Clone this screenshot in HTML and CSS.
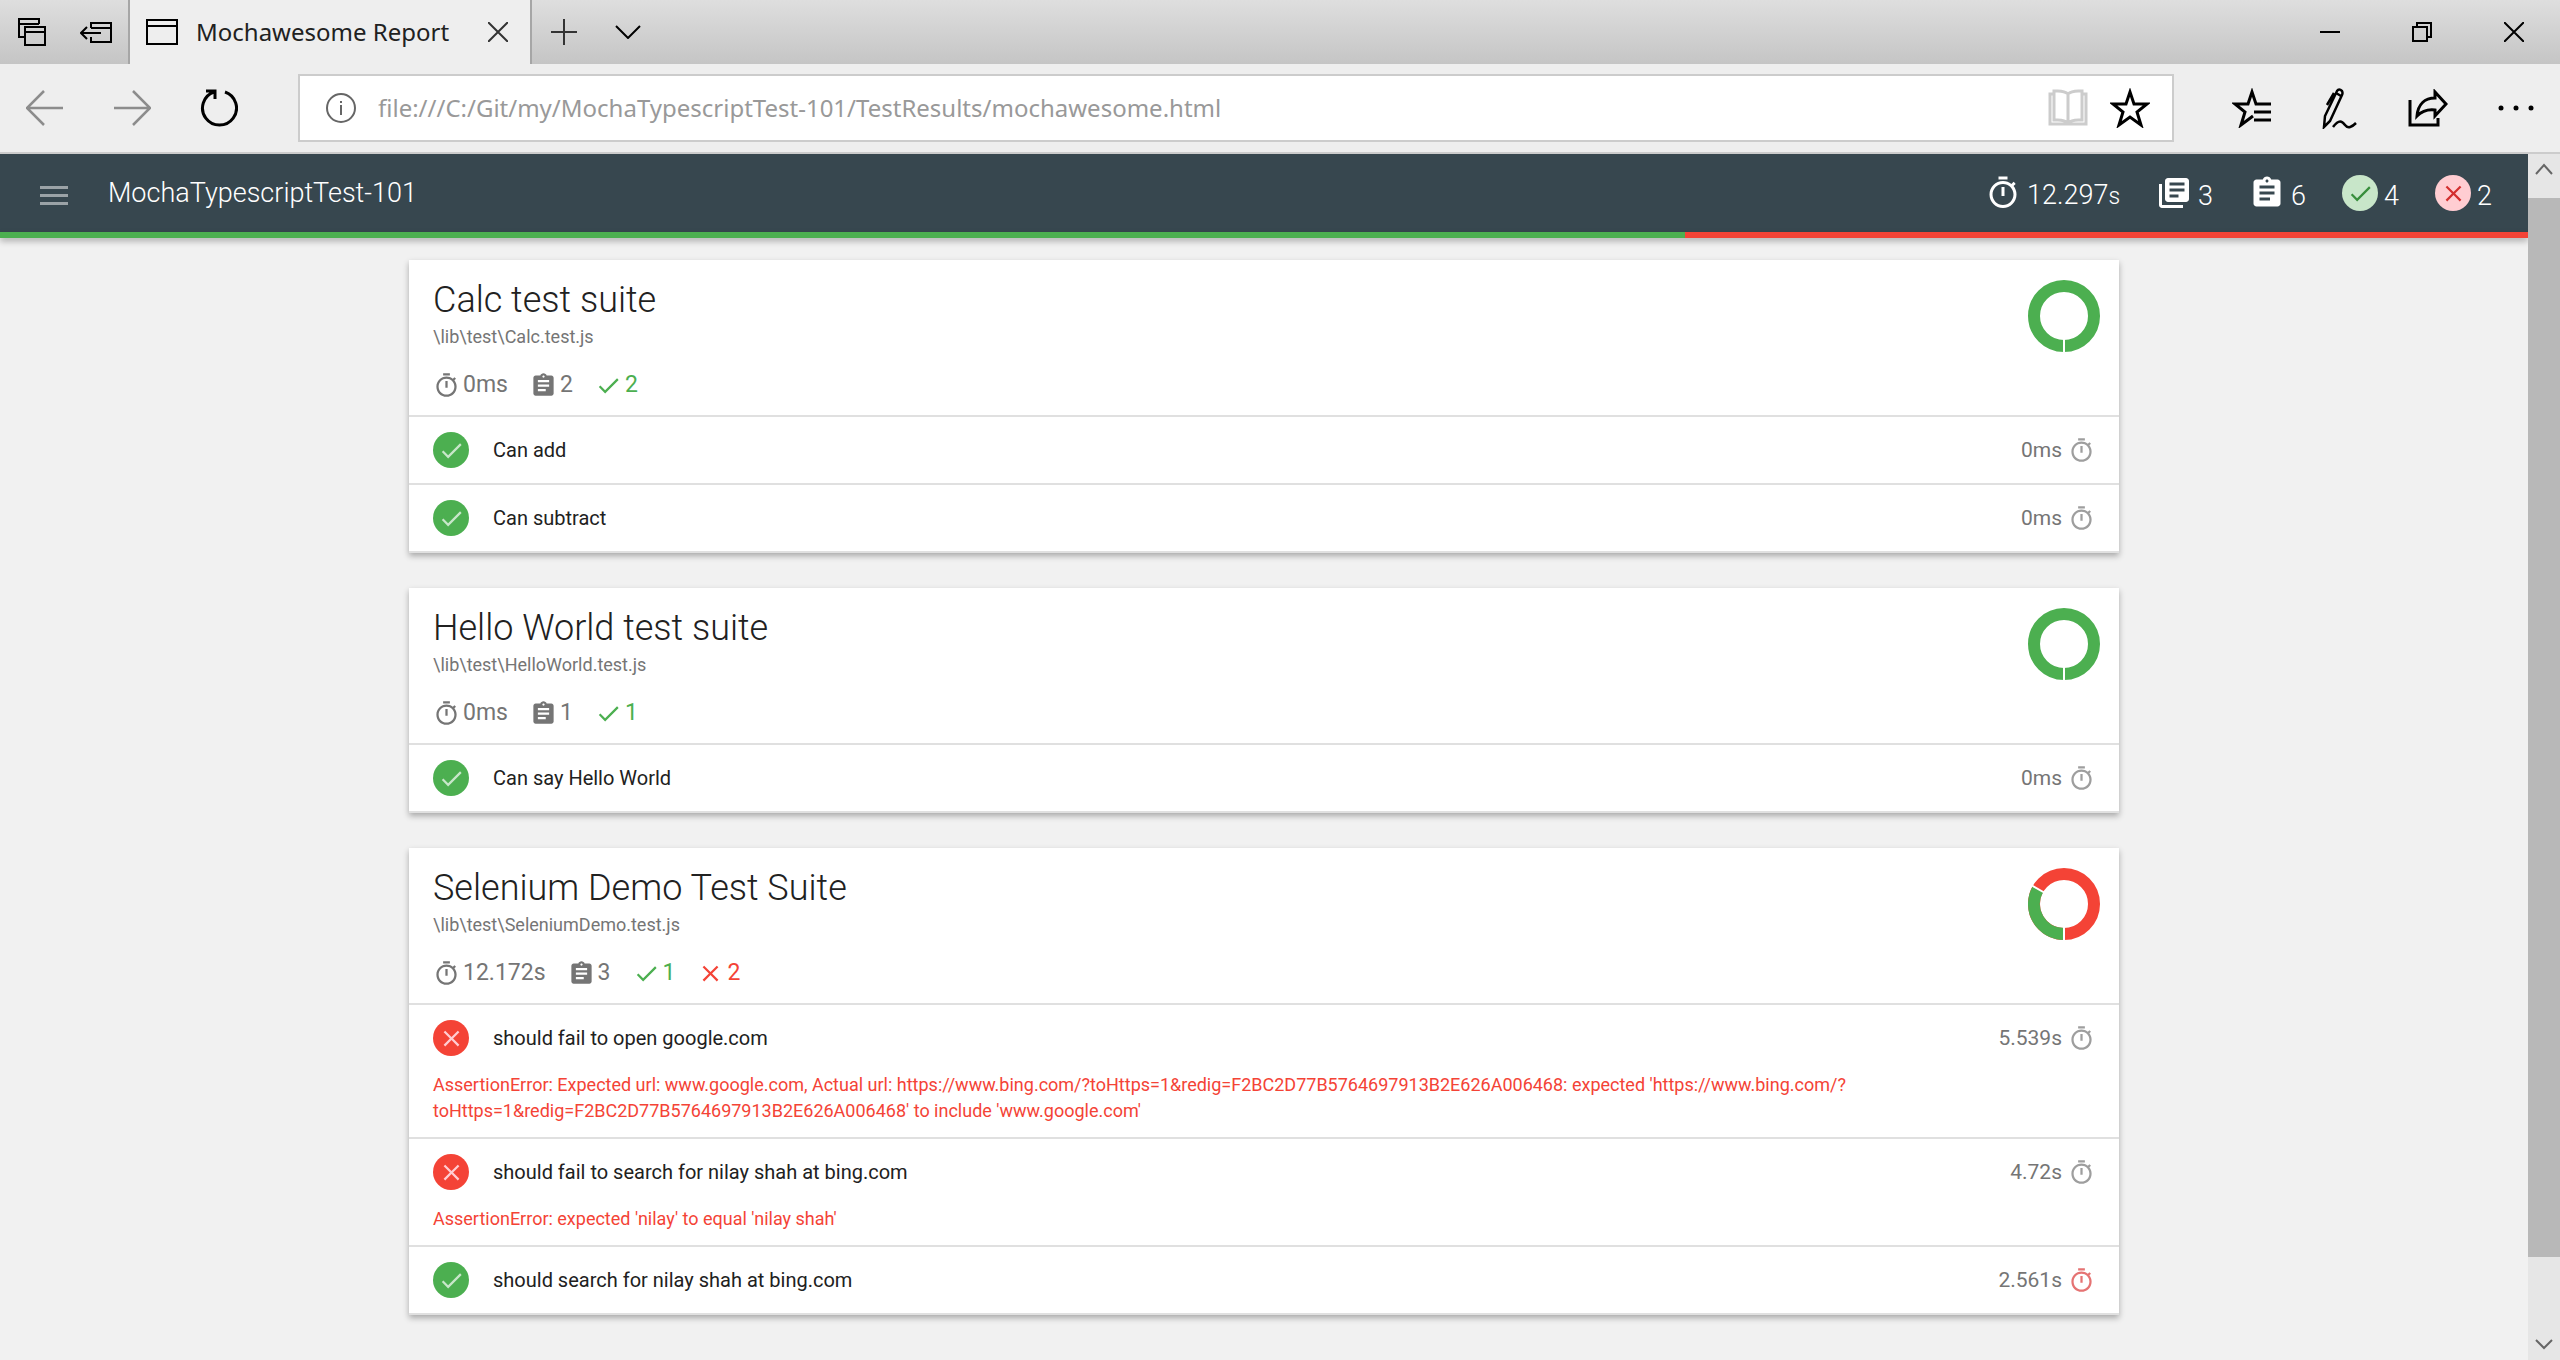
FILE: index.html
```html
<!DOCTYPE html>
<html lang="en">
<head>
<meta charset="utf-8">
<title>Mochawesome Report</title>
<link rel="stylesheet" href="styles.css">
</head>
<body>
<svg class="sprite" aria-hidden="true">
  <symbol id="timer" viewBox="0 0 24 24"><path d="M15 1H9v2h6V1zm-4 13h2V8h-2v6zm8.03-6.61l1.42-1.42c-.43-.51-.9-.99-1.41-1.41l-1.42 1.42C16.07 4.74 14.12 4 12 4c-4.97 0-9 4.03-9 9s4.02 9 9 9 9-4.03 9-9c0-2.12-.74-4.07-1.97-5.61zM12 20c-3.87 0-7-3.13-7-7s3.13-7 7-7 7 3.13 7 7-3.13 7-7 7z"/></symbol>
  <symbol id="library" viewBox="0 0 24 24"><path d="M4 6H2v14c0 1.100.9 2 2 2h14v-2H4V6zm16-4H8c-1.100 0-2 .9-2 2v12c0 1.100.9 2 2 2h12c1.100 0 2-.9 2-2V4c0-1.100-.9-2-2-2zm-1 9H9V9h10v2zm-4 4H9v-2h6v2zm4-8H9V5h10v2z"/></symbol>
  <symbol id="assignment" viewBox="0 0 24 24"><path d="M19 3h-4.180C14.400 1.840 13.300 1 12 1c-1.300 0-2.400.84-2.820 2H5c-1.100 0-2 .9-2 2v14c0 1.100.9 2 2 2h14c1.100 0 2-.9 2-2V5c0-1.100-.9-2-2-2zm-7 0c.55 0 1 .45 1 1s-.45 1-1 1-1-.45-1-1 .45-1 1-1zm2 14H7v-2h7v2zm3-4H7v-2h10v2zm0-4H7V7h10v2z"/></symbol>
  <symbol id="check" viewBox="0 0 24 24"><path d="M9 16.200L4.800 12l-1.400 1.400L9 19 21 7l-1.400-1.400L9 16.200z"/></symbol>
  <symbol id="close" viewBox="0 0 24 24"><path d="M19 6.410L17.590 5 12 10.590 6.410 5 5 6.410 10.590 12 5 17.590 6.410 19 12 13.410 17.590 19 19 17.590 13.410 12z"/></symbol>
</svg>

<header class="titlebar">
  <div class="window-tools">
    <button class="chrome-btn" aria-label="Tabs you've set aside"><svg width="30" height="30" viewBox="0 0 30 30"><path class="line" d="M7 20H1V2h20v5M1 7h20M7 10h20v18H7zM7 15h20"/></svg></button>
    <button class="chrome-btn" aria-label="Set these tabs aside"><svg width="34" height="30" viewBox="0 0 34 30"><path class="line" d="M11 11V6h20v19H11v-5M11 11h20M2 16h19M7 10l-6 6 6 6"/></svg></button>
  </div>
  <div class="tab">
    <svg width="32" height="28" viewBox="0 0 32 28"><path class="line" d="M1 2h30v24H1zM1 8h30"/></svg>
    <span class="tab-title">Mochawesome Report</span>
    <button class="chrome-btn" aria-label="Close tab"><svg width="20" height="20" viewBox="0 0 20 20"><path class="line dim" d="M0 0l20 20M20 0L0 20"/></svg></button>
  </div>
  <div class="tab-actions">
    <button class="chrome-btn" aria-label="New tab"><svg width="26" height="26" viewBox="0 0 26 26"><path class="line dim" d="M13 0v26M0 13h26"/></svg></button>
    <button class="chrome-btn" aria-label="Show tab previews"><svg width="26" height="14" viewBox="0 0 26 14"><path class="line" d="M1 1l12 12L25 1"/></svg></button>
  </div>
  <div class="window-controls">
    <button class="chrome-btn" aria-label="Minimize"><svg width="20" height="20" viewBox="0 0 20 20"><path class="line" d="M0 10h20"/></svg></button>
    <button class="chrome-btn" aria-label="Restore"><svg width="20" height="20" viewBox="0 0 20 20"><path class="line" d="M1 5h14v14H1zM5 5V1h14v14h-4"/></svg></button>
    <button class="chrome-btn" aria-label="Close window"><svg width="20" height="20" viewBox="0 0 20 20"><path class="line" d="M0 0l20 20M20 0L0 20"/></svg></button>
  </div>
</header>

<nav class="toolbar">
  <div class="nav-buttons">
    <button class="chrome-btn" aria-label="Back"><svg width="38" height="36" viewBox="0 0 38 36"><path class="line faded" d="M37 18H2M18 1L1 18l17 17"/></svg></button>
    <button class="chrome-btn" aria-label="Forward"><svg width="38" height="36" viewBox="0 0 38 36"><path class="line faded" d="M1 18h35M20 1l17 17-17 17"/></svg></button>
    <button class="chrome-btn" aria-label="Refresh"><svg width="38" height="38" viewBox="0 0 38 38"><path class="line bold" d="M25 3A17 17 0 1 1 14 3M6 2h9v8"/></svg></button>
  </div>
  <div class="address">
    <svg width="30" height="30" viewBox="0 0 30 30"><circle class="line info" cx="15" cy="15" r="14"/><path class="line info" d="M15 12v10M15 8v2"/></svg>
    <input class="url" type="text" aria-label="Address" value="file:///C:/Git/my/MochaTypescriptTest-101/TestResults/mochawesome.html">
    <button class="chrome-btn" aria-label="Reading view"><svg width="40" height="38" viewBox="0 0 40 38"><path class="line book" d="M20 5C16 1 11 2 6 2v29c5 0 10-1 14 3 4-4 9-3 14-3V2c-5 0-10-1-14 3zM20 5v29M6 5H2v30h36V5h-4"/></svg></button>
    <button class="chrome-btn" aria-label="Add to favorites"><svg width="40" height="40" viewBox="0 0 40 40"><path class="line bold" d="M20 4l4 12h13l-10 8 4 13-11-8-11 8 4-13L3 16h13z"/></svg></button>
  </div>
  <div class="tools">
    <button class="chrome-btn" aria-label="Favorites"><svg width="40" height="40" viewBox="0 0 40 40"><path class="line bold" d="M39 16H24L20 4l-4 12H3l10 8-4 13 12-9M22 24h17M22 32h17"/></svg></button>
    <button class="chrome-btn" aria-label="Add notes"><svg width="36" height="42" viewBox="0 0 36 42"><path class="line pen" d="M2 40l1-11L15 4q2-3 5 0 1 2 0 4L8 34zM14 6l5 3M12 6L5 18M11 40c6-8 9-6 12-2s7 2 11-2"/></svg></button>
    <button class="chrome-btn" aria-label="Share"><svg width="40" height="38" viewBox="0 0 40 38"><path class="line bold" d="M2 11v25h28v-7M9 27c1-12 8-18 18-18V3l11 12-11 12v-6c-8-1-13 1-18 6z"/></svg></button>
    <button class="chrome-btn" aria-label="More"><svg width="36" height="6" viewBox="0 0 36 6"><circle cx="3" cy="3" r="2.500"/><circle cx="18" cy="3" r="2.500"/><circle cx="33" cy="3" r="2.500"/></svg></button>
  </div>
</nav>

<div class="viewport">
  <div class="page">
    <header class="report-bar">
      <button class="menu" aria-label="Open menu"><span></span><span></span><span></span></button>
      <h1 class="report-title">MochaTypescriptTest-101</h1>
      <ul class="totals">
        <li><svg class="icon-lg"><use href="#timer"/></svg><span class="total">12.297<small>s</small></span></li>
        <li><svg class="icon-lg"><use href="#library"/></svg><span class="total">3</span></li>
        <li><svg class="icon-lg"><use href="#assignment"/></svg><span class="total">6</span></li>
        <li><span class="badge pass-light"><svg class="icon"><use href="#check"/></svg></span><span class="total">4</span></li>
        <li><span class="badge fail-light"><svg class="icon"><use href="#close"/></svg></span><span class="total">2</span></li>
      </ul>
    </header>
    <div class="ratio"><span class="ratio-pass" style="width: 66.67%"></span></div>

    <main class="suites">
      <section class="suite">
        <header class="suite-head">
          <div class="suite-info">
            <h2>Calc test suite</h2>
            <p class="path">\lib\test\Calc.test.js</p>
            <ul class="stats">
              <li><svg class="icon"><use href="#timer"/></svg>0ms</li>
              <li><svg class="icon"><use href="#assignment"/></svg>2</li>
              <li class="pass"><svg class="icon"><use href="#check"/></svg>2</li>
            </ul>
          </div>
          <svg class="donut" viewBox="0 0 72 72"><circle class="ring ring-pass" cx="36" cy="36" r="30"/><path class="cut" d="M36 58v14"/></svg>
        </header>
        <ul class="tests">
          <li class="test"><button class="test-row"><span class="badge passed"><svg class="icon"><use href="#check"/></svg></span><span class="name">Can add</span><span class="duration">0ms</span><svg class="icon clock"><use href="#timer"/></svg></button></li>
          <li class="test"><button class="test-row"><span class="badge passed"><svg class="icon"><use href="#check"/></svg></span><span class="name">Can subtract</span><span class="duration">0ms</span><svg class="icon clock"><use href="#timer"/></svg></button></li>
        </ul>
      </section>

      <section class="suite">
        <header class="suite-head">
          <div class="suite-info">
            <h2>Hello World test suite</h2>
            <p class="path">\lib\test\HelloWorld.test.js</p>
            <ul class="stats">
              <li><svg class="icon"><use href="#timer"/></svg>0ms</li>
              <li><svg class="icon"><use href="#assignment"/></svg>1</li>
              <li class="pass"><svg class="icon"><use href="#check"/></svg>1</li>
            </ul>
          </div>
          <svg class="donut" viewBox="0 0 72 72"><circle class="ring ring-pass" cx="36" cy="36" r="30"/><path class="cut" d="M36 58v14"/></svg>
        </header>
        <ul class="tests">
          <li class="test"><button class="test-row"><span class="badge passed"><svg class="icon"><use href="#check"/></svg></span><span class="name">Can say Hello World</span><span class="duration">0ms</span><svg class="icon clock"><use href="#timer"/></svg></button></li>
        </ul>
      </section>

      <section class="suite">
        <header class="suite-head">
          <div class="suite-info">
            <h2>Selenium Demo Test Suite</h2>
            <p class="path">\lib\test\SeleniumDemo.test.js</p>
            <ul class="stats">
              <li><svg class="icon"><use href="#timer"/></svg>12.172s</li>
              <li><svg class="icon"><use href="#assignment"/></svg>3</li>
              <li class="pass"><svg class="icon"><use href="#check"/></svg>1</li>
              <li class="fail"><svg class="icon"><use href="#close"/></svg>2</li>
            </ul>
          </div>
          <svg class="donut" viewBox="0 0 72 72"><circle class="ring ring-fail" cx="36" cy="36" r="30"/><path class="ring ring-pass" d="M36 66A30 30 0 0 1 10 21"/><path class="cut" d="M36 58v14M17 25L4 17.500"/></svg>
        </header>
        <ul class="tests">
          <li class="test failing">
            <button class="test-row"><span class="badge failed"><svg class="icon"><use href="#close"/></svg></span><span class="name">should fail to open google.com</span><span class="duration">5.539s</span><svg class="icon clock"><use href="#timer"/></svg></button>
            <p class="error">AssertionError: Expected url: www.google.com, Actual url: https://www.bing.com/?toHttps=1&amp;redig=F2BC2D77B5764697913B2E626A006468: expected 'https://www.bing.com/?<wbr>toHttps=1&amp;redig=F2BC2D77B5764697913B2E626A006468' to include 'www.google.com'</p>
          </li>
          <li class="test failing">
            <button class="test-row"><span class="badge failed"><svg class="icon"><use href="#close"/></svg></span><span class="name">should fail to search for nilay shah at bing.com</span><span class="duration">4.72s</span><svg class="icon clock"><use href="#timer"/></svg></button>
            <p class="error">AssertionError: expected 'nilay' to equal 'nilay shah'</p>
          </li>
          <li class="test"><button class="test-row"><span class="badge passed"><svg class="icon"><use href="#check"/></svg></span><span class="name">should search for nilay shah at bing.com</span><span class="duration">2.561s</span><svg class="icon clock slow"><use href="#timer"/></svg></button></li>
        </ul>
      </section>
    </main>
  </div>
  <div class="scrollbar" aria-hidden="true">
    <svg class="arrow" viewBox="0 0 32 44"><path class="line info" d="M8 20l8-9 8 9"/></svg>
    <div class="thumb"></div>
    <div class="track"></div>
    <svg class="arrow" viewBox="0 0 32 44"><path class="line info" d="M8 24l8 8 8-8"/></svg>
  </div>
</div>
</body>
</html>
```
FILE: styles.css
```css
* { box-sizing: border-box; }

body {
  margin: 0;
  min-height: 100vh;
  display: flex;
  flex-direction: column;
  background: #f1f1f1;
  color: #212121;
  font-family: Roboto, "Liberation Sans", sans-serif;
}

h1, h2, p, ul { margin: 0; padding: 0; }
h1, h2 { font-weight: 300; }
ul { list-style: none; }
button { border: 0; padding: 0; background: none; color: inherit; font: inherit; text-align: left; }
svg { display: block; flex: none; }
.sprite { display: none; }

/* Browser frame */
.line { fill: none; stroke: #000; stroke-width: 2; }
.line.bold { stroke-width: 3; }
.line.pen { stroke-width: 2.5; }
.line.dim { stroke: #333; }
.line.faded { stroke: #8c8c8c; stroke-width: 2.5; }
.line.info { stroke: #666; }
.line.book { stroke: #ccc; stroke-width: 3; }
.chrome-btn { display: flex; align-items: center; }

.titlebar {
  display: flex;
  height: 64px;
  background: linear-gradient(#dedede, #c5c5c5);
  font-family: "Noto Sans", "Open Sans", sans-serif;
}
.window-tools { display: flex; gap: 32px; width: 130px; padding-left: 18px; border-right: 2px solid #a6a6a6; }
.tab { display: flex; align-items: center; gap: 18px; width: 400px; padding: 0 22px 0 16px; background: #eee; }
.tab-title { flex: 1; font-size: 24px; line-height: 32px; white-space: nowrap; }
.tab-actions { display: flex; gap: 38px; padding-left: 19px; border-left: 2px solid #a6a6a6; }
.window-controls { display: flex; gap: 72px; margin-left: auto; padding-right: 36px; }

.toolbar {
  display: flex;
  align-items: center;
  height: 90px;
  background: #eee;
  border-bottom: 2px solid #ccc;
}
.nav-buttons { display: flex; align-items: center; gap: 49px; width: 298px; padding-left: 26px; }
.address {
  display: flex;
  flex: 1;
  align-items: center;
  gap: 22px;
  height: 68px;
  padding: 0 22px 0 26px;
  background: #fff;
  border: 2px solid #ccc;
}
.url {
  flex: 1;
  min-width: 0;
  padding: 0;
  border: 0;
  background: none;
  color: #999;
  font: 24px/32px "Noto Sans", "Open Sans", sans-serif;
}
.tools { display: flex; align-items: center; gap: 50px; padding: 0 26px 0 58px; }

.viewport { display: flex; flex: 1; }
.page { flex: 1; min-width: 0; }
.scrollbar { display: flex; flex-direction: column; width: 32px; background: #e6e6e6; }
.arrow { width: 32px; height: 44px; }
.thumb { flex: 18; background: #b8b8b8; }
.track { flex: 1; }

/* Report header */
.report-bar {
  display: flex;
  align-items: center;
  height: 78px;
  padding: 0 36px 0 40px;
  background: #37474f;
  color: #fff;
}
.menu { display: flex; flex-direction: column; gap: 5px; padding-top: 4px; }
.menu span { width: 28px; height: 3px; background: #9ba3a7; }
.report-title { flex: 1; margin-left: 40px; font-size: 27px; line-height: 36px; }
.totals { display: flex; gap: 36px; font-size: 27px; font-weight: 300; line-height: 36px; }
.totals li { display: flex; align-items: center; gap: 6px; }
.total { padding-top: 5px; }
.totals small { font-size: 23px; }
.icon { width: 27px; height: 27px; fill: currentColor; }
.icon-lg { width: 36px; height: 36px; fill: currentColor; }
.badge { display: flex; flex: none; align-items: center; justify-content: center; width: 36px; height: 36px; border-radius: 50%; }
.pass-light { background: #c8e6c9; color: #388e3c; }
.fail-light { background: #ffcdd2; color: #d32f2f; }
.passed { background: #4caf50; color: #c8e6c9; }
.failed { background: #f44336; color: #ffcdd2; }

.ratio { display: flex; height: 6px; background: #f44336; box-shadow: 0 3px 6px rgba(0, 0, 0, .3); }
.ratio-pass { background: #4caf50; }

/* Suites */
.suites { display: grid; gap: 35px; max-width: 1710px; margin: 0 auto; padding: 22px 0 36px; }
.suite { background: #fff; box-shadow: 0 3px 6px rgba(0, 0, 0, .3); }
.suite-head { display: flex; justify-content: space-between; padding: 20px 19px 12px 24px; border-bottom: 2px solid #e0e0e0; }
h2 { font-size: 36px; line-height: 40px; }
.path { color: #757575; font-size: 18px; line-height: 34px; }
.stats { display: flex; gap: 22px; margin-top: 13px; color: #757575; font-size: 23px; line-height: 36px; }
.stats li { display: flex; align-items: center; gap: 3px; }
.stats .pass { color: #4caf50; }
.stats .fail { color: #f44336; }
.donut { width: 72px; height: 72px; }
.ring { fill: none; stroke-width: 12; }
.ring-pass { stroke: #4caf50; }
.ring-fail { stroke: #f44336; }
.cut { stroke: #fff; stroke-width: 2; }

.test { padding: 15px 24px; border-bottom: 2px solid #e0e0e0; }
.test.failing { padding-bottom: 13px; }
.test-row { display: flex; align-items: center; width: 100%; font-size: 20px; line-height: 36px; }
.name { flex: 1; margin-left: 24px; }
.duration { margin-right: 6px; color: #757575; font-size: 21px; }
.clock { color: #9e9e9e; }
.clock.slow { color: #e57373; }
.error { padding-top: 16px; color: #f44336; font-size: 18px; line-height: 26px; }
```
